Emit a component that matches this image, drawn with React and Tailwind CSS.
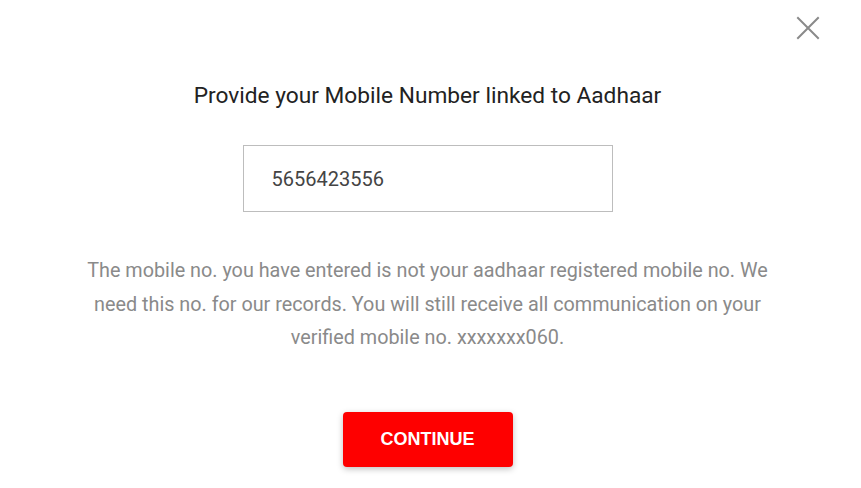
import React, { useState } from 'react';

const CloseIcon = () => (
  <svg width="24" height="24" viewBox="0 0 24 24" fill="none" stroke="#8a8a8a" strokeWidth="2" strokeLinecap="square">
    <path d="M2 2L22 22M22 2L2 22" />
  </svg>
);

const App = () => {
  const [mobile, setMobile] = useState('5656423556');

  return (
    <div className="w-[861px] h-[488px] bg-white flex flex-col items-center pr-[6px] font-['Roboto',_'Liberation_Sans',_sans-serif] overflow-hidden">
      <div className="w-full flex justify-end pt-[16px] pr-[35px]">
        <button className="p-0">
          <CloseIcon />
        </button>
      </div>
      <h1 className="mt-[42px] text-[22.7px] leading-[28px] text-[#222]">
        Provide your Mobile Number linked to Aadhaar
      </h1>
      <div className="mt-[35px] w-[370px] h-[67px] border border-[#bdbdbd] flex items-center px-[28px]">
        <input
          value={mobile}
          onChange={e => setMobile(e.target.value)}
          className="w-full outline-none text-[20px] text-[#444] bg-transparent"
        />
      </div>
      <p className="mt-[42px] w-[700px] text-center text-[19.8px] leading-[33.5px] text-[#8a8a8a]">
        The mobile no. you have entered is not your aadhaar registered mobile no. We need this no. for our records. You will still receive all communication on your verified mobile no. xxxxxxx060.
      </p>
      <button className="mt-[57px] w-[170px] h-[55px] rounded-[4px] bg-[#fe0000] text-white text-[18px] font-bold shadow-[0_2px_6px_rgba(0,0,0,0.25)] font-['Liberation_Sans',_sans-serif]">
        CONTINUE
      </button>
    </div>
  );
};

export default App;
